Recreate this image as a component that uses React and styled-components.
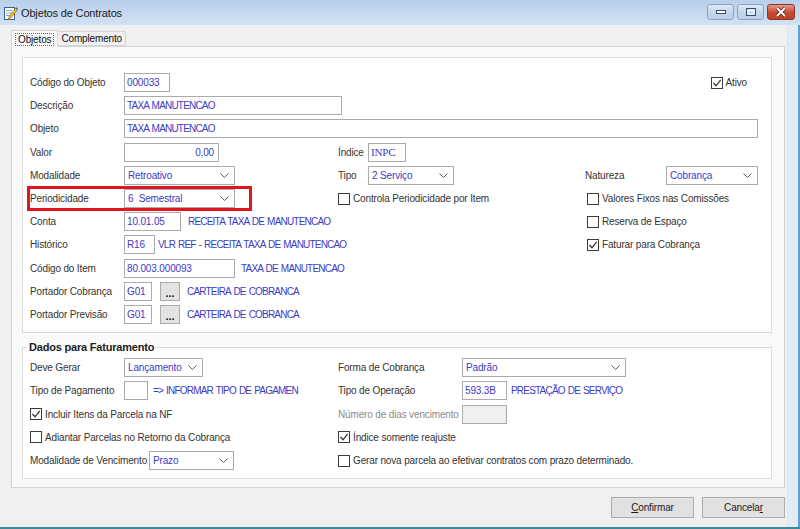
import styled, { createGlobalStyle } from "styled-components";

const GlobalStyle = createGlobalStyle`
  html, body {
    margin: 0;
    padding: 0;
  }
  body {
    font-family: "Liberation Sans", Arial, sans-serif;
    font-size: 10px;
    letter-spacing: -0.15px;
    color: #333;
    background: #f0f0f0;
  }
`;

const BLUE = "#3b3bc4";

const Window = styled.div`
  width: 800px;
  height: 529px;
  box-sizing: border-box;
  display: flex;
  flex-direction: column;
  background: #f0f0f0;
  border-bottom: 2px solid #3a8c9c;
  overflow: hidden;
`;

const TitleBar = styled.div`
  height: 25px;
  flex: none;
  display: flex;
  align-items: center;
  gap: 3px;
  padding-left: 3px;
  background: linear-gradient(#b8cfea, #d3e2f4);
`;

const TitleText = styled.span`
  font-size: 11px;
  color: #1b1b1b;
`;

const Controls = styled.div`
  margin-left: auto;
  align-self: flex-start;
  margin-top: 4px;
  padding-right: 5px;
  display: flex;
  gap: 3px;
`;

const CtrlButton = styled.div`
  width: ${(p) => (p.$close ? 28 : 27)}px;
  height: 16px;
  box-sizing: border-box;
  border: 1px solid ${(p) => (p.$close ? "#8e3427" : "#8ca5c4")};
  border-radius: 3px;
  background: ${(p) =>
    p.$close
      ? "linear-gradient(#e49a8c, #c9472f 55%, #c0402b)"
      : "linear-gradient(#dfe9f5, #c3d5eb 55%, #bcd0e8)"};
  display: flex;
  align-items: center;
  justify-content: center;
`;

const Main = styled.div`
  flex: 1;
  display: flex;
  min-height: 0;
`;

const Body = styled.div`
  flex: 1;
  display: flex;
  flex-direction: column;
  padding: 5px 2px 0 11px;
`;

const RightFrame = styled.div`
  width: 13px;
  flex: none;
  box-sizing: border-box;
  background: #e2ebf6;
  border-left: 1px solid #dbe4ef;
  border-right: 2px solid #62a1d8;
`;

const TabStrip = styled.div`
  height: 16px;
  flex: none;
  display: flex;
  align-items: flex-end;
`;

const Tab = styled.div`
  position: relative;
  z-index: ${(p) => (p.$active ? 1 : 0)};
  height: ${(p) => (p.$active ? 17 : 15)}px;
  margin-bottom: ${(p) => (p.$active ? -1 : 0)}px;
  box-sizing: border-box;
  padding: 0 ${(p) => (p.$active ? 3 : 2)}px;
  border: 1px solid #d5d5d5;
  border-bottom: ${(p) => (p.$active ? "none" : "1px solid #d5d5d5")};
  border-left: ${(p) => (p.$active ? "1px solid #d5d5d5" : "none")};
  background: ${(p) => (p.$active ? "#f9f9f9" : "#f0f0f0")};
  display: flex;
  align-items: center;
  color: #111;
`;

const TabLabel = styled.span`
  border: 1px dotted ${(p) => (p.$focus ? "#666" : "transparent")};
  padding: 0 ${(p) => (p.$focus ? 2 : 0)}px;
  line-height: 11px;
`;

const TabPage = styled.div`
  height: 442px;
  flex: none;
  box-sizing: border-box;
  border: 1px solid #d5d5d5;
  background: #f9f9f9;
  padding: 10px 12px 0 10px;
  display: flex;
  flex-direction: column;
  gap: 8px;
`;

const Section = styled.div`
  height: 276px;
  box-sizing: border-box;
  background: #fff;
  border: 1px solid #dcdcdc;
  padding: 13px 0 0 7px;
`;

const Group = styled.fieldset`
  margin: 0;
  min-width: 0;
  background: #fff;
  border: 1px solid #dcdcdc;
  padding: 3px 0 6px 7px;
`;

const Legend = styled.legend`
  font-size: 11px;
  font-weight: bold;
  letter-spacing: -0.2px;
  color: #222;
  padding: 0 2px;
  margin-left: -3px;
`;

const FormGrid = styled.div`
  display: grid;
  grid-template-columns: 308px 247px 1fr;
  grid-auto-rows: ${(p) => p.$row}px;
  align-items: center;
`;

const Cell = styled.div`
  grid-column: ${(p) => p.$col || 1};
  position: relative;
  display: flex;
  align-items: center;
  justify-self: ${(p) => (p.$end ? "end" : "stretch")};
  margin-right: ${(p) => p.$mr || 0}px;
  height: 100%;
`;

const Label = styled.span`
  width: ${(p) => p.$w}px;
  flex: none;
  white-space: nowrap;
  color: ${(p) => (p.$muted ? "#8c8c8c" : "#333")};
`;

const Input = styled.div`
  width: ${(p) => p.$w}px;
  height: 19px;
  flex: none;
  box-sizing: border-box;
  border: 1px solid #ababab;
  background: ${(p) => (p.$disabled ? "#f0f0f0" : "#fff")};
  padding: 0 ${(p) => (p.$right ? 4 : 2)}px;
  line-height: 17px;
  text-align: ${(p) => (p.$right ? "right" : "left")};
  color: ${BLUE};
  white-space: nowrap;
  overflow: hidden;
  letter-spacing: ${(p) => (p.$caps ? "-0.8px" : "inherit")};
  word-spacing: ${(p) => (p.$caps ? "1px" : "normal")};
  font-family: ${(p) =>
    p.$serif ? '"Liberation Serif", "Times New Roman", serif' : "inherit"};
  font-size: ${(p) => (p.$serif ? "11px" : "inherit")};
`;

const SelectBox = styled.div`
  width: ${(p) => p.$w}px;
  height: 19px;
  flex: none;
  box-sizing: border-box;
  border: 1px solid #ababab;
  background: #fff;
  display: flex;
  align-items: center;
  justify-content: space-between;
  padding: 0 5px 0 3px;
  color: ${BLUE};
  white-space: pre;
`;

const Value = styled.span`
  margin-left: ${(p) => p.$ml || 0}px;
  color: ${BLUE};
  white-space: nowrap;
  letter-spacing: ${(p) => (p.$caps ? "-0.8px" : "inherit")};
  word-spacing: ${(p) => (p.$caps ? "1px" : "normal")};
`;

const DotsButton = styled.div`
  width: 20px;
  height: 19px;
  flex: none;
  box-sizing: border-box;
  margin-left: 8px;
  border: 1px solid #ababab;
  background: #e3e3e3;
  display: flex;
  align-items: flex-end;
  justify-content: center;
  font-size: 11px;
  font-weight: bold;
  line-height: 14px;
  color: #111;
  letter-spacing: 0;
`;

const CheckRow = styled.label`
  display: flex;
  align-items: center;
  gap: 3px;
  margin-left: ${(p) => p.$ml || 0}px;
  white-space: nowrap;
  color: #333;
`;

const Box = styled.span`
  width: 12px;
  height: 12px;
  flex: none;
  box-sizing: border-box;
  border: 1px solid #3c3c3c;
  background: #fff;
  display: flex;
  align-items: center;
  justify-content: center;
`;

const Highlight = styled.div`
  position: absolute;
  left: -3px;
  top: -1px;
  width: 225px;
  height: 25px;
  box-sizing: border-box;
  border: 3px solid #e2161d;
  pointer-events: none;
`;

const ButtonBar = styled.div`
  display: flex;
  justify-content: flex-end;
  gap: 8px;
  margin-top: 9px;
`;

const Button = styled.div`
  width: 83px;
  height: 21px;
  box-sizing: border-box;
  border: 1px solid #adadad;
  background: #e1e1e1;
  display: flex;
  align-items: center;
  justify-content: center;
  color: #1a1a1a;
  u {
    text-decoration: underline;
  }
`;

const Chevron = () => (
  <svg width="9" height="5" viewBox="0 0 9 5">
    <polyline
      points="0.5,0.5 4.5,4.5 8.5,0.5"
      fill="none"
      stroke="#5a5a5a"
      strokeWidth="1"
    />
  </svg>
);

const Select = ({ w, children }) => (
  <SelectBox $w={w}>
    <span>{children}</span>
    <Chevron />
  </SelectBox>
);

const Check = ({ checked, ml, children }) => (
  <CheckRow $ml={ml}>
    <Box>
      {checked && (
        <svg width="10" height="10" viewBox="0 0 10 10">
          <polyline
            points="1.5,5 4,7.8 8.7,1.8"
            fill="none"
            stroke="#333"
            strokeWidth="1.3"
          />
        </svg>
      )}
    </Box>
    {children}
  </CheckRow>
);

const AppIcon = () => (
  <svg width="15" height="16" viewBox="0 0 15 16">
    <rect x="1.5" y="2.5" width="10" height="12" fill="#fff" stroke="#3f5f93" />
    <path d="M3 5.5h6M3 8h6M3 10.5h4" stroke="#8aa6cf" />
    <path
      d="M6 11.5 L12.6 3.2 L14.4 4.8 L7.8 13 L5.6 13.8 Z"
      fill="#f3c21c"
      stroke="#7a5a0c"
      strokeWidth="0.6"
    />
    <path d="M12.6 3.2 L13.4 2.3 L15 3.9 L14.4 4.8 Z" fill="#2f5fb0" />
  </svg>
);

const App = () => {
  return (
    <>
      <GlobalStyle />
      <Window>
        <TitleBar>
          <AppIcon />
          <TitleText>Objetos de Contratos</TitleText>
          <Controls>
            <CtrlButton>
              <svg width="10" height="4" viewBox="0 0 10 4">
                <rect x="0.5" y="0.5" width="9" height="3" fill="#fff" stroke="#3a4d66" />
              </svg>
            </CtrlButton>
            <CtrlButton>
              <svg width="10" height="8" viewBox="0 0 10 8">
                <rect x="0.5" y="0.5" width="9" height="7" fill="none" stroke="#3a4d66" />
                <rect x="2" y="2.5" width="6" height="3.5" fill="none" stroke="#fff" />
              </svg>
            </CtrlButton>
            <CtrlButton $close>
              <svg width="12" height="10" viewBox="0 0 12 10">
                <path d="M2 1 L10 9 M10 1 L2 9" stroke="#5a1a12" strokeWidth="3.4" />
                <path d="M2 1 L10 9 M10 1 L2 9" stroke="#fff" strokeWidth="2" />
              </svg>
            </CtrlButton>
          </Controls>
        </TitleBar>

        <Main>
          <Body>
            <TabStrip>
              <Tab $active>
                <TabLabel $focus>Objetos</TabLabel>
              </Tab>
              <Tab>
                <TabLabel>Complemento</TabLabel>
              </Tab>
            </TabStrip>

            <TabPage>
              <Section>
                <FormGrid $row={23.2}>
                  <Cell>
                    <Label $w={94}>Código do Objeto</Label>
                    <Input $w={46}>000033</Input>
                  </Cell>
                  <Cell $col={3} $end $mr={24}>
                    <Check checked>Ativo</Check>
                  </Cell>

                  <Cell $col="1 / -1">
                    <Label $w={94}>Descrição</Label>
                    <Input $w={218} $caps>TAXA MANUTENCAO</Input>
                  </Cell>

                  <Cell $col="1 / -1">
                    <Label $w={94}>Objeto</Label>
                    <Input $w={634} $caps>TAXA MANUTENCAO</Input>
                  </Cell>

                  <Cell>
                    <Label $w={94}>Valor</Label>
                    <Input $w={95} $right>0,00</Input>
                  </Cell>
                  <Cell $col={2}>
                    <Label $w={30}>Índice</Label>
                    <Input $w={38} $serif>INPC</Input>
                  </Cell>

                  <Cell>
                    <Label $w={94}>Modalidade</Label>
                    <Select w={111}>Retroativo</Select>
                  </Cell>
                  <Cell $col={2}>
                    <Label $w={30}>Tipo</Label>
                    <Select w={86}>2 Serviço</Select>
                  </Cell>
                  <Cell $col={3}>
                    <Label $w={81}>Natureza</Label>
                    <Select w={92}>Cobrança</Select>
                  </Cell>

                  <Cell>
                    <Label $w={94}>Periodicidade</Label>
                    <Select w={111}>6  Semestral</Select>
                    <Highlight />
                  </Cell>
                  <Cell $col={2}>
                    <Check>Controla Periodicidade por Item</Check>
                  </Cell>
                  <Cell $col={3}>
                    <Check ml={2}>Valores Fixos nas Comissões</Check>
                  </Cell>

                  <Cell>
                    <Label $w={94}>Conta</Label>
                    <Input $w={57}>10.01.05</Input>
                    <Value $ml={7} $caps>RECEITA TAXA DE MANUTENCAO</Value>
                  </Cell>
                  <Cell $col={3}>
                    <Check ml={2}>Reserva de Espaço</Check>
                  </Cell>

                  <Cell>
                    <Label $w={94}>Histórico</Label>
                    <Input $w={31}>R16</Input>
                    <Value $ml={3} $caps>VLR REF - RECEITA TAXA DE MANUTENCAO</Value>
                  </Cell>
                  <Cell $col={3}>
                    <Check checked ml={2}>Faturar para Cobrança</Check>
                  </Cell>

                  <Cell $col="1 / 3">
                    <Label $w={94}>Código do Item</Label>
                    <Input $w={111}>80.003.000093</Input>
                    <Value $ml={6} $caps>TAXA DE MANUTENCAO</Value>
                  </Cell>

                  <Cell $col="1 / 3">
                    <Label $w={94}>Portador Cobrança</Label>
                    <Input $w={28}>G01</Input>
                    <DotsButton>...</DotsButton>
                    <Value $ml={7} $caps>CARTEIRA DE COBRANCA</Value>
                  </Cell>

                  <Cell $col="1 / 3">
                    <Label $w={94}>Portador Previsão</Label>
                    <Input $w={28}>G01</Input>
                    <DotsButton>...</DotsButton>
                    <Value $ml={7} $caps>CARTEIRA DE COBRANCA</Value>
                  </Cell>
                </FormGrid>
              </Section>

              <Group>
                <Legend>Dados para Faturamento</Legend>
                <FormGrid $row={23.25}>
                  <Cell>
                    <Label $w={94}>Deve Gerar</Label>
                    <Select w={79}>Lançamento</Select>
                  </Cell>
                  <Cell $col="2 / 4">
                    <Label $w={124}>Forma de Cobrança</Label>
                    <Select w={164}>Padrão</Select>
                  </Cell>

                  <Cell>
                    <Label $w={94}>Tipo de Pagamento</Label>
                    <Input $w={24} />
                    <Value $ml={5} $caps>=&gt; INFORMAR TIPO DE PAGAMEN</Value>
                  </Cell>
                  <Cell $col="2 / 4">
                    <Label $w={124}>Tipo de Operação</Label>
                    <Input $w={45}>593.3B</Input>
                    <Value $ml={4} $caps>PRESTAÇÃO DE SERVIÇO</Value>
                  </Cell>

                  <Cell>
                    <Check checked>Incluir Itens da Parcela na NF</Check>
                  </Cell>
                  <Cell $col="2 / 4">
                    <Label $w={124} $muted>Número de dias vencimento</Label>
                    <Input $w={45} $disabled />
                  </Cell>

                  <Cell>
                    <Check>Adiantar Parcelas no Retorno da Cobrança</Check>
                  </Cell>
                  <Cell $col="2 / 4">
                    <Check checked>Índice somente reajuste</Check>
                  </Cell>

                  <Cell>
                    <Label $w={119}>Modalidade de Vencimento</Label>
                    <Select w={85}>Prazo</Select>
                  </Cell>
                  <Cell $col="2 / 4">
                    <Check>Gerar nova parcela ao efetivar contratos com prazo determinado.</Check>
                  </Cell>
                </FormGrid>
              </Group>
            </TabPage>

            <ButtonBar>
              <Button>
                <span>
                  <u>C</u>onfirmar
                </span>
              </Button>
              <Button>
                <span>
                  Cancela<u>r</u>
                </span>
              </Button>
            </ButtonBar>
          </Body>
          <RightFrame />
        </Main>
      </Window>
    </>
  );
};

export default App;
